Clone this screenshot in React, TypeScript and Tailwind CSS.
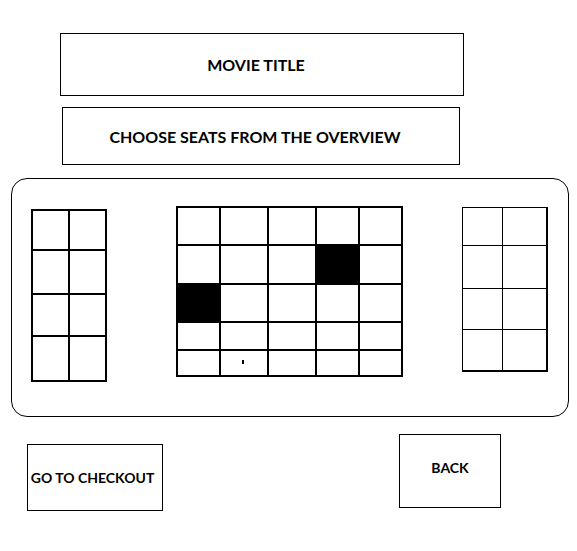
import React from "react";

const font = { fontFamily: "Lato, 'Open Sans', sans-serif" };

function Cell({ black }: { black?: boolean }) {
  return <div className={black ? "bg-black" : "bg-white"} />;
}

export default function App() {
  const mid = Array.from({ length: 25 }, (_, i) => i);
  return (
    <div className="w-[577px] h-[551px] bg-white relative text-black" style={font}>
      <div className="pt-[33px]">
        <div className="ml-[60px] w-[404px] h-[63px] border border-black flex items-center justify-center">
          <span className="font-bold text-[16px] -ml-[12px]">MOVIE TITLE</span>
        </div>
        <div className="ml-[62px] mt-[11px] w-[398px] h-[58px] border border-black flex items-center justify-center">
          <span className="font-bold text-[16px] -ml-[12px] mt-[2px]">CHOOSE SEATS FROM THE OVERVIEW</span>
        </div>
        <div className="ml-[11px] mt-[13px] w-[558px] h-[239px] border border-black rounded-[16px] flex items-start">
          {/* left block */}
          <div className="ml-[19px] mt-[30px] grid grid-cols-[35px_35px] grid-rows-[38px_42px_40px_43px] gap-[2px] bg-black p-[2px] w-[76px]">
            {Array.from({ length: 8 }, (_, i) => (
              <Cell key={i} />
            ))}
          </div>
          {/* middle block */}
          <div className="ml-[69px] mt-[27px] grid grid-cols-[41px_46px_46px_41px_41px] grid-rows-[36px_37px_36px_26px_24px] gap-[2px] bg-black p-[2px] w-[227px]">
            {mid.map((i) => (
              <div key={i} className={`${i === 8 || i === 10 ? "bg-black" : "bg-white"} relative`}>
                {i === 21 && <div className="absolute left-[21px] top-[9px] w-[2px] h-[4px] bg-black" />}
              </div>
            ))}
          </div>
          {/* right block */}
          <div className="ml-[59px] mt-[28px] grid grid-cols-[39px_43px] grid-rows-[37px_42px_40px_40px] gap-[1px] bg-black p-[1px] pr-[2px] pb-[2px] w-[86px]">
            {Array.from({ length: 8 }, (_, i) => (
              <Cell key={i} />
            ))}
          </div>
        </div>
        <div className="flex items-start mt-[17px]">
          <div className="ml-[27px] mt-[10px] w-[136px] h-[67px] border border-black flex items-center justify-center">
            <span className="font-bold text-[14px] -ml-[5px]">GO TO CHECKOUT</span>
          </div>
          <div className="ml-[236px] w-[102px] h-[74px] border border-black flex items-center justify-center">
            <span className="font-bold text-[14px] mt-[-8px]">BACK</span>
          </div>
        </div>
      </div>
    </div>
  );
}
